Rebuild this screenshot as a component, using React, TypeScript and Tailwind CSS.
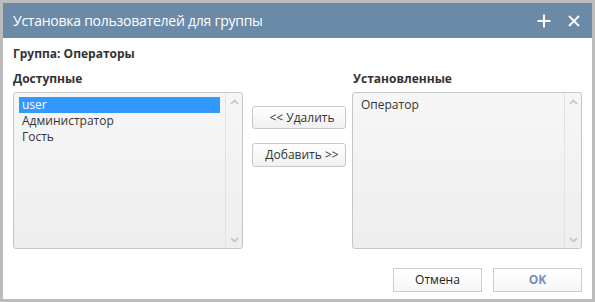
import React from "react";

const font = { fontFamily: '"Open Sans", "Noto Sans", "DejaVu Sans", sans-serif' };

function Chevron({ up }: { up?: boolean }) {
  return (
    <svg width="9" height="6" viewBox="0 0 9 6" className="block">
      <polyline
        points={up ? "1,5 4.5,1.5 8,5" : "1,1 4.5,4.5 8,1"}
        fill="none"
        stroke="#c4c4c4"
        strokeWidth="1.6"
      />
    </svg>
  );
}

function ListBox({ items, selected }: { items: string[]; selected?: number }) {
  return (
    <div className="h-[157px] w-[230px] rounded-[3px] border border-[#c6c6c6] bg-gradient-to-b from-[#f6f6f6] to-[#eeeeee] flex overflow-hidden">
      <div className="flex-1 pt-[4px] pl-[5px] pr-[5px]">
        {items.map((it, i) => (
          <div
            key={it}
            className={
              "h-[16px] leading-[16px] pl-[3px] text-[12px] " +
              (i === selected ? "bg-[#3399ff] text-white" : "text-[#333333]")
            }
          >
            {it}
          </div>
        ))}
      </div>
      <div className="w-[17px] border-l border-[#e2e2e2] flex flex-col items-center justify-between pt-[6px] pb-[5px]">
        <Chevron up />
        <Chevron />
      </div>
    </div>
  );
}

export default function App() {
  return (
    <div className="w-[595px] h-[302px] bg-[#bcbcbc] p-[3px]" style={font}>
      <div className="h-full bg-white flex flex-col">
        <div className="h-[35px] bg-[#6a8aa8] flex items-center justify-between pl-[10px] pr-[12px]">
          <span className="text-white text-[14px] leading-none tracking-[-0.25px]">
            Установка пользователей для группы
          </span>
          <div className="flex items-center gap-[17px]">
            <svg width="14" height="14" viewBox="0 0 14 14" className="block">
              <path d="M7 0.5V13.5M0.5 7H13.5" stroke="white" strokeWidth="2" />
            </svg>
            <svg width="12" height="12" viewBox="0 0 12 12" className="block">
              <path d="M1 1L11 11M11 1L1 11" stroke="white" strokeWidth="1.8" />
            </svg>
          </div>
        </div>
        <div className="flex-1 flex flex-col px-[10px] pt-[8px] pb-[7px]">
          <div className="h-[16px] leading-[16px] text-[12px] font-bold text-[#333333]">
            Группа: Операторы
          </div>
          <div className="mt-[9px] flex">
            <div className="flex flex-col w-[230px]">
              <div className="h-[16px] leading-[16px] text-[12px] font-bold text-[#333333] mb-[5px]">
                Доступные
              </div>
              <ListBox items={["user", "Администратор", "Гость"]} selected={0} />
            </div>
            <div className="flex-1 flex flex-col pt-[35px] pl-[9px] gap-[14px]">
              <button className="w-[94px] h-[23px] rounded-[3px] border border-[#c8c8c8] bg-gradient-to-b from-[#ffffff] to-[#f0f0f0] text-[12px] text-[#333333] pl-[6px]">
                &lt;&lt; Удалить
              </button>
              <button className="w-[94px] h-[24px] rounded-[3px] border border-[#c8c8c8] bg-gradient-to-b from-[#ffffff] to-[#f0f0f0] text-[12px] text-[#333333] pl-[6px]">
                Добавить &gt;&gt;
              </button>
            </div>
            <div className="flex flex-col w-[230px]">
              <div className="h-[16px] leading-[16px] text-[12px] font-bold text-[#333333] mb-[5px] pl-[1px]">
                Установленные
              </div>
              <ListBox items={["Оператор"]} />
            </div>
          </div>
          <div className="mt-[19px] flex justify-end gap-[11px]">
            <button className="w-[89px] h-[24px] border border-[#cdcdcd] bg-gradient-to-b from-[#ffffff] to-[#f6f6f6] text-[12px] text-[#222222]">
              Отмена
            </button>
            <button className="w-[89px] h-[24px] border border-[#cdcdcd] bg-gradient-to-b from-[#ffffff] to-[#f6f6f6] text-[12px] font-bold text-[#7391b0]">
              OK
            </button>
          </div>
        </div>
      </div>
    </div>
  );
}
